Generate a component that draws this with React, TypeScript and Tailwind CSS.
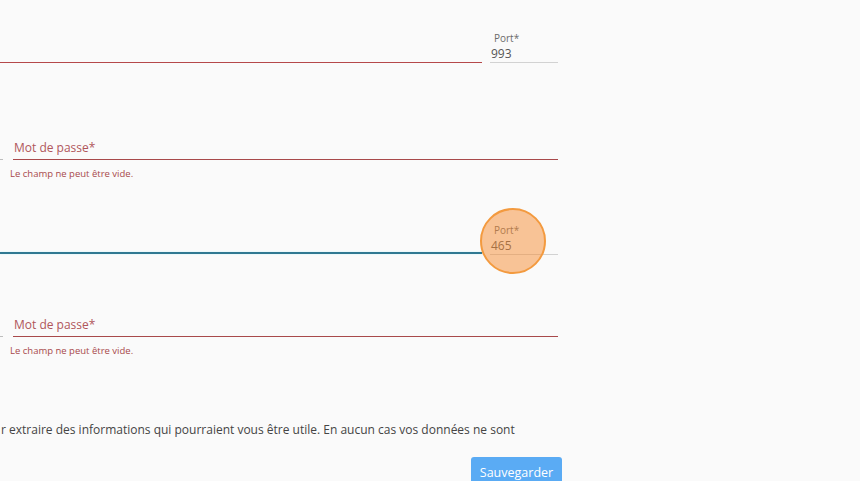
const font = { fontFamily: '"Open Sans", "Noto Sans", sans-serif' }

function PortField({ value }: { value: string }) {
  return (
    <div className="ml-2 flex w-[68px] flex-none flex-col border-b border-[#d2d2d2]">
      <span className="pl-[4px] text-[10px] leading-[14px] text-[#6b6b6b]">Port*</span>
      <span className="pl-[1px] text-[12px] leading-[17px] text-[#555]">{value}</span>
    </div>
  )
}

function PasswordRow() {
  return (
    <>
      <div className="flex h-[20px] items-end">
        <div className="w-[3px] flex-none border-b border-[#bdbdbd]" />
        <div className="ml-[10px] w-[545px] flex-none border-b border-[#a8494b]">
          <span className="block pb-[2px] pl-[1px] text-[12px] leading-[18px] text-[#b0565a]">Mot de passe*</span>
        </div>
      </div>
      <p className="mt-[8px] pl-[10px] text-[9.5px] leading-[12px] text-[#a8494b]">Le champ ne peut être vide.</p>
    </>
  )
}

export default function App() {
  return (
    <div className="relative h-[481px] w-[860px] overflow-hidden bg-[#fafafa]" style={font}>
      <div className="flex h-[63px] items-end">
        <div className="w-[482px] flex-none border-b border-[#b5484a]" />
        <PortField value="993" />
      </div>

      <div className="mt-[77px]">
        <PasswordRow />
      </div>

      <div className="mt-[42px] flex h-[33px] items-end">
        <div className="mb-[1px] h-[2px] w-[482px] flex-none bg-[#2f7891] shadow-[0_0_2px_#c6f1fc]" />
        <PortField value="465" />
      </div>

      <div className="mt-[62px]">
        <PasswordRow />
      </div>

      <p className="mt-[64px] whitespace-nowrap pl-[1px] text-[12px] leading-[18px] text-[#444]">
        r extraire des informations qui pourraient vous être utile. En aucun cas vos données ne sont
      </p>

      <div className="mt-[18px] pl-[471px]">
        <button
          type="button"
          className="h-[32px] w-[91px] rounded-[3px] bg-[#5aabf4] text-[12.5px] text-white"
        >
          Sauvegarder
        </button>
      </div>

      <div className="absolute left-[480px] top-[208px] h-[66px] w-[66px] rounded-full border-2 border-[#f39a3f] bg-[rgba(245,140,50,0.5)]" />
    </div>
  )
}
